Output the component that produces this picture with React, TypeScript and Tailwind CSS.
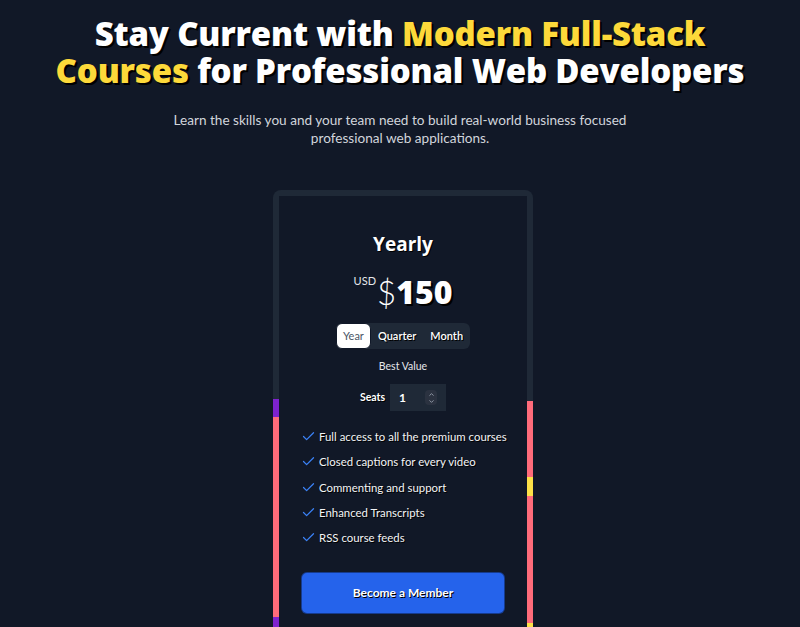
import React, { useState } from 'react'
import { Check, ChevronUp, ChevronDown } from 'lucide-react'

const features = [
  'Full access to all the premium courses',
  'Closed captions for every video',
  'Commenting and support',
  'Enhanced Transcripts',
  'RSS course feeds',
]

const periods = ['Year', 'Quarter', 'Month']

export default function App() {
  const [period, setPeriod] = useState('Year')

  return (
    <div className="min-h-screen bg-[#111827] text-white font-['Lato',sans-serif] flex flex-col items-center pt-[15px]">
      {/* Hero heading */}
      <h1 className="text-center font-['Open_Sans',sans-serif] text-[33px] leading-[37px] font-extrabold tracking-[-0.2px] [text-shadow:2px_2px_0_#000]">
        Stay Current with <span className="text-[#fdd93a]">Modern Full-Stack</span>
        <br />
        <span className="text-[#fdd93a]">Courses</span> for Professional Web Developers
      </h1>
      <p className="mt-[22px] text-center text-[13.6px] leading-[18px] text-gray-300 max-w-[462px]">
        Learn the skills you and your team need to build real-world business focused professional web applications.
      </p>

      {/* Pricing card with multi-colour border */}
      <div className="mt-[43px] ml-[6px] w-[260px] rounded-lg p-1.5 [background:linear-gradient(to_bottom,#1f2937_209px,#7e22ce_209px,#7e22ce_227px,#ff6b7a_227px,#ff6b7a_427px,#7e22ce_427px)_left_top/50%_100%_no-repeat,linear-gradient(to_bottom,#1f2937_211px,#ff6b7a_211px,#ff6b7a_287px,#fde047_287px,#fde047_306px,#ff6b7a_306px,#ff6b7a_433px,#fde047_433px)_right_top/50%_100%_no-repeat]">
        <div className="bg-[#111827] px-[22px] pt-[34px] pb-6 flex flex-col items-center">
          <h2 className="font-['Open_Sans',sans-serif] text-[19px] leading-7 font-bold [text-shadow:1px_1px_0_#000]">Yearly</h2>

          <div className="mt-[14px] flex items-start h-10">
            <span className="text-[11px] leading-none mt-[3px] mr-[1px] text-gray-200">USD</span>
            <span className="text-[33px] leading-10 font-light">$</span>
            <span className="font-['Open_Sans',sans-serif] text-[32px] leading-10 font-extrabold [text-shadow:2px_2px_0_#000]">150</span>
          </div>

          <div className="mt-[11px] flex h-[26px] rounded-md bg-[#1f2937] text-[11px]">
            {periods.map((p) => (
              <button
                key={p}
                onClick={() => setPeriod(p)}
                className={
                  p === period
                    ? 'w-[35px] rounded-md bg-white text-gray-600 border border-gray-900'
                    : 'px-[7px] text-white font-semibold [text-shadow:1px_1px_0_#000]'
                }
              >
                {p}
              </button>
            ))}
          </div>

          <div className="mt-[10px] text-[10.5px] leading-[14px] text-gray-200">Best Value</div>

          <div className="mt-[11px] flex items-center gap-[5px]">
            <span className="text-[10.5px] font-bold [text-shadow:1px_1px_0_#000]">Seats</span>
            <div className="w-14 h-[27px] bg-[#1f2937] flex items-center justify-between pl-[9px] pr-[9px]">
              <span className="text-[12px] font-bold">1</span>
              <div className="w-3 h-[15px] bg-[#2b3240] rounded-sm flex flex-col items-center justify-center text-gray-400">
                <ChevronUp size={7} strokeWidth={3} />
                <ChevronDown size={7} strokeWidth={3} />
              </div>
            </div>
          </div>

          <ul className="mt-[13px] self-stretch">
            {features.map((f) => (
              <li key={f} className="flex items-center h-[25.25px] gap-[3px] text-[11.4px] text-gray-100 whitespace-nowrap [text-shadow:1px_1px_0_#000]">
                <Check size={15} strokeWidth={2} className="text-[#3b82f6] shrink-0" />
                {f}
              </li>
            ))}
          </ul>

          <button className="mt-[22px] w-full h-[42px] rounded-md bg-[#2563eb] border border-black/40 text-[12px] font-bold [text-shadow:1px_1px_0_#000]">
            Become a Member
          </button>
        </div>
      </div>
    </div>
  )
}
